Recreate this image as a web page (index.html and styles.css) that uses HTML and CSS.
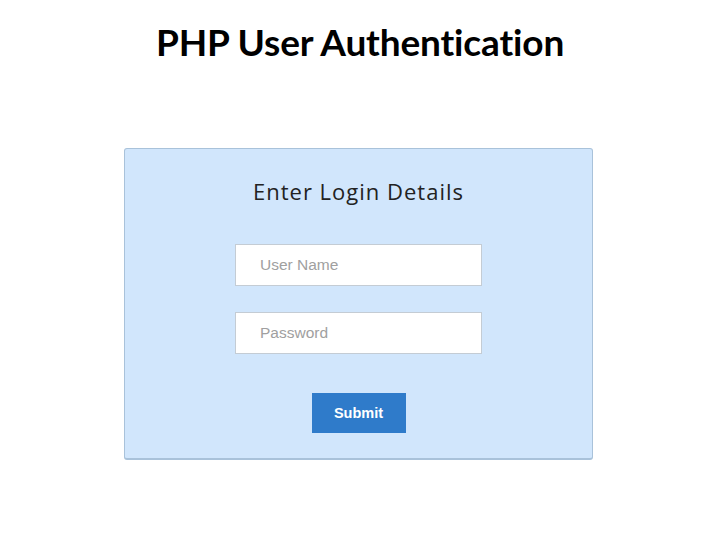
FILE: index.html
```html
<!DOCTYPE html>
<html>
<head>
<meta charset="utf-8">
<link rel="stylesheet" href="styles.css">
</head>
<body>
<h1 class="title">PHP User Authentication</h1>
<form class="card">
  <div class="card-title">Enter Login Details</div>
  <div class="field"><input class="input" type="text" placeholder="User Name"></div>
  <div class="field"><input class="input" type="password" placeholder="Password"></div>
  <div class="actions"><button class="btn" type="button">Submit</button></div>
</form>
</body>
</html>
```
FILE: styles.css
```css
html, body {
  margin: 0;
  padding: 0;
  background: #ffffff;
}
body {
  width: 720px;
  height: 540px;
  overflow: hidden;
}
.title {
  margin: 0;
  padding-top: 19px;
  height: 49px;
  text-align: center;
  font-family: "Lato", "Open Sans", sans-serif;
  font-weight: 700;
  font-size: 37px;
  line-height: 46px;
  color: #000;
  font-variant-ligatures: none;
  letter-spacing: -0.15px;
}
.card {
  box-sizing: border-box;
  margin: 80px 0 0 124px;
  width: 469px;
  height: 312px;
  background: #d1e6fc;
  border: 1px solid #a9c2da;
  border-bottom-width: 2px;
  border-radius: 3px;
  display: flex;
  flex-direction: column;
  align-items: center;
  padding-top: 27px;
}
.card-title {
  font-family: "Open Sans", sans-serif;
  font-size: 22px;
  letter-spacing: 1px;
  line-height: 30px;
  color: #222;
  height: 30px;
  margin-bottom: 38px;
}
.field {
  margin-bottom: 26px;
  height: 42px;
}
.input {
  box-sizing: border-box;
  width: 247px;
  height: 42px;
  border: 1px solid #c4ccd4;
  background: #fff;
  padding: 0 0 0 24px;
  font-family: "Liberation Sans", Arial, sans-serif;
  font-size: 15.5px;
  color: #333;
  outline: none;
  margin: 0;
}
.input::placeholder {
  color: #a0a0a0;
}
.actions {
  margin-top: 13px;
}
.btn {
  width: 94px;
  height: 40px;
  border: none;
  background: #2f7bca;
  color: #fff;
  font-family: "Liberation Sans", Arial, sans-serif;
  font-weight: 700;
  font-size: 14.5px;
  padding: 0;
  margin: 0;
}
```
